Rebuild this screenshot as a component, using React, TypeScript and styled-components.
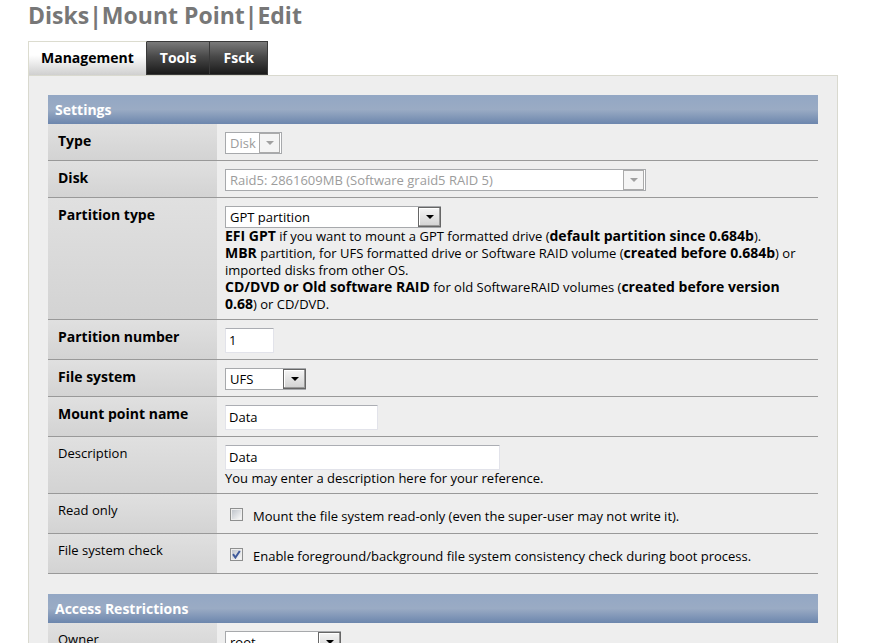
import React, { useState } from "react";
import styled, { createGlobalStyle, css } from "styled-components";

const GlobalStyle = createGlobalStyle`
  html { scrollbar-width: none; }
  body {
    margin: 0;
    background: #fff;
    color: #000;
    font: 13px/17px "Open Sans", "Noto Sans", sans-serif;
  }
  *, *::before, *::after { box-sizing: border-box; }
`;

const Page = styled.main`
  padding: 0 33px 20px 28px;
`;

const Title = styled.h1`
  margin: 0;
  height: 41px;
  font-size: 23px;
  line-height: 31px;
  font-weight: 700;
  color: #777;
`;

const Tabs = styled.nav`
  display: flex;
`;

const Tab = styled.a<{ $active?: boolean }>`
  height: 34px;
  padding: 0 13px;
  border: 1px solid #3a3a3a;
  border-left-width: 0;
  font-size: 14px;
  line-height: 32px;
  font-weight: 700;
  text-decoration: none;
  color: #fff;
  background: linear-gradient(#7a7a7a, #494949 45%, #1a1a1a);
  ${(p) =>
    p.$active &&
    css`
      padding: 0 12px;
      border: 1px solid #dcdccf;
      border-right-color: #3a3a3a;
      border-bottom: 0;
      color: #000;
      background: linear-gradient(#fff 40%, #cfcfcf);
    `}
`;

const Panel = styled.form`
  padding: 19px;
  border: 1px solid #d9d9cf;
  background: #eee;
`;

const SettingsTable = styled.table`
  width: 100%;
  border-collapse: separate;
  border-spacing: 0;
  table-layout: fixed;
  & + & {
    margin-top: 20px;
  }
`;

const LabelColumn = styled.col`
  width: 169px;
`;

const SectionHeading = styled.th`
  height: 29px;
  padding: 0 7px;
  text-align: left;
  font-size: 14px;
  font-weight: 700;
  color: #fff;
  background: linear-gradient(#93a7c4, #9aabc4 50%, #6c86ad);
`;

const LabelCell = styled.th<{ $required?: boolean }>`
  padding: 8px 10px 6px;
  border-bottom: 1px solid #999;
  vertical-align: top;
  text-align: left;
  font-size: ${(p) => (p.$required ? "14px" : "13px")};
  font-weight: ${(p) => (p.$required ? 700 : 400)};
  background: linear-gradient(#e0e0e0, #d3d3d3);
`;

const FieldCell = styled.td`
  padding: 8px 8px 6px;
  border-bottom: 1px solid #999;
  vertical-align: top;
`;

const Strong = styled.strong`
  font-size: 14px;
  line-height: 1;
`;

const SelectBox = styled.span<{ $width: number }>`
  display: grid;
  width: ${(p) => p.$width}px;
  max-width: 100%;
  height: 22px;
`;

const Select = styled.select`
  grid-area: 1 / 1;
  width: 100%;
  height: 22px;
  padding: 0 24px 0 4px;
  appearance: none;
  border: 1px solid #a7a9ac;
  border-radius: 0;
  background: #fff;
  color: #000;
  font: inherit;
  &:disabled {
    color: #9c9c9c;
    opacity: 1;
  }
`;

const Arrow = styled.span<{ $disabled?: boolean }>`
  grid-area: 1 / 1;
  justify-self: end;
  align-self: center;
  display: grid;
  place-items: center;
  width: 23px;
  height: 20px;
  border: 1px solid #666;
  box-shadow: inset -1px -1px #999, inset 1px 1px #fff;
  background: linear-gradient(#f5f5f5, #d2d2d2);
  color: #000;
  pointer-events: none;
  ${(p) =>
    p.$disabled &&
    css`
      width: 21px;
      height: 20px;
      margin-right: 2px;
      border-color: #aaa;
      box-shadow: none;
      background: #f4f4f4;
      color: #a0a0a0;
    `}
`;

const TextInput = styled.input<{ $width: number }>`
  display: block;
  width: ${(p) => p.$width}px;
  max-width: 100%;
  height: 25px;
  padding: 0 3px 1px;
  border: 1px solid #e2e3ea;
  border-top-color: #abadb3;
  border-radius: 1px;
  background: #fff;
  color: #000;
  font: inherit;
`;

const CheckLabel = styled.label`
  display: flex;
  gap: 10px;
  height: 25px;
  padding-left: 5px;
  line-height: 21px;
  align-items: center;
`;

const CheckText = styled.span`
  align-self: flex-end;
`;

const CheckBox = styled.span`
  display: grid;
  width: 13px;
  height: 13px;
  place-items: center;
`;

const CheckInput = styled.input`
  grid-area: 1 / 1;
  width: 13px;
  height: 13px;
  margin: 0;
  padding: 1px;
  appearance: none;
  border: 1px solid #8e8f8f;
  background: linear-gradient(135deg, #c0c5cc, #f8f8f8) content-box #f4f4f4;
`;

const CheckMark = styled.svg`
  grid-area: 1 / 1;
  pointer-events: none;
`;

function Dropdown({ id, width, options, disabled }: {
  id: string;
  width: number;
  options: string[];
  disabled?: boolean;
}) {
  return (
    <SelectBox $width={width}>
      <Select id={id} name={id} disabled={disabled} defaultValue={options[0]}>
        {options.map((o) => (
          <option key={o}>{o}</option>
        ))}
      </Select>
      <Arrow $disabled={disabled} aria-hidden>
        <svg width="8" height="4" viewBox="0 0 8 4">
          <path d="M0 0H8L4 4Z" fill="currentColor" />
        </svg>
      </Arrow>
    </SelectBox>
  );
}

function Check({ id, initial, children }: {
  id: string;
  initial: boolean;
  children: React.ReactNode;
}) {
  const [checked, setChecked] = useState(initial);
  return (
    <CheckLabel>
      <CheckBox>
        <CheckInput
          id={id}
          type="checkbox"
          checked={checked}
          onChange={(e) => setChecked(e.target.checked)}
        />
        {checked && (
          <CheckMark width="9" height="9" viewBox="0 0 9 9" aria-hidden>
            <path d="M1 4.2L3.4 7.5L7.8 1" fill="none" stroke="#3f5a9b" strokeWidth="2" />
          </CheckMark>
        )}
      </CheckBox>
      <CheckText>{children}</CheckText>
    </CheckLabel>
  );
}

function Row({ id, label, required, children }: {
  id: string;
  label: string;
  required?: boolean;
  children: React.ReactNode;
}) {
  return (
    <tr>
      <LabelCell scope="row" $required={required}>
        <label htmlFor={id}>{label}</label>
      </LabelCell>
      <FieldCell>{children}</FieldCell>
    </tr>
  );
}

function Section({ title, children }: { title: string; children: React.ReactNode }) {
  return (
    <SettingsTable>
      <colgroup>
        <LabelColumn />
        <col />
      </colgroup>
      <thead>
        <tr>
          <SectionHeading colSpan={2}>{title}</SectionHeading>
        </tr>
      </thead>
      <tbody>{children}</tbody>
    </SettingsTable>
  );
}

export default function App() {
  return (
    <>
      <GlobalStyle />
      <Page>
        <Title>Disks|Mount Point|Edit</Title>
        <Tabs>
          <Tab href="#management" $active>Management</Tab>
          <Tab href="#tools">Tools</Tab>
          <Tab href="#fsck">Fsck</Tab>
        </Tabs>
        <Panel>
          <Section title="Settings">
            <Row id="type" label="Type" required>
              <Dropdown id="type" width={57} options={["Disk"]} disabled />
            </Row>
            <Row id="disk" label="Disk" required>
              <Dropdown id="disk" width={421} options={["Raid5: 2861609MB (Software graid5 RAID 5)"]} disabled />
            </Row>
            <Row id="partition-type" label="Partition type" required>
              <Dropdown id="partition-type" width={216} options={["GPT partition"]} />
              <Strong>EFI GPT</Strong> if you want to mount a GPT formatted drive (
              <Strong>default partition since 0.684b</Strong>).
              <br />
              <Strong>MBR</Strong> partition, for UFS formatted drive or Software RAID volume (
              <Strong>created before 0.684b</Strong>) or imported disks from other OS.
              <br />
              <Strong>CD/DVD or Old software RAID</Strong> for old SoftwareRAID volumes (
              <Strong>created before version 0.68</Strong>) or CD/DVD.
            </Row>
            <Row id="partition-number" label="Partition number" required>
              <TextInput id="partition-number" $width={49} defaultValue="1" />
            </Row>
            <Row id="file-system" label="File system" required>
              <Dropdown id="file-system" width={81} options={["UFS"]} />
            </Row>
            <Row id="mount-name" label="Mount point name" required>
              <TextInput id="mount-name" $width={153} defaultValue="Data" />
            </Row>
            <Row id="description" label="Description">
              <TextInput id="description" $width={275} defaultValue="Data" />
              You may enter a description here for your reference.
            </Row>
            <Row id="read-only" label="Read only">
              <Check id="read-only" initial={false}>
                Mount the file system read-only (even the super-user may not write it).
              </Check>
            </Row>
            <Row id="fs-check" label="File system check">
              <Check id="fs-check" initial>
                Enable foreground/background file system consistency check during boot process.
              </Check>
            </Row>
          </Section>
          <Section title="Access Restrictions">
            <Row id="owner" label="Owner">
              <Dropdown id="owner" width={116} options={["root"]} />
            </Row>
          </Section>
        </Panel>
      </Page>
    </>
  );
}
